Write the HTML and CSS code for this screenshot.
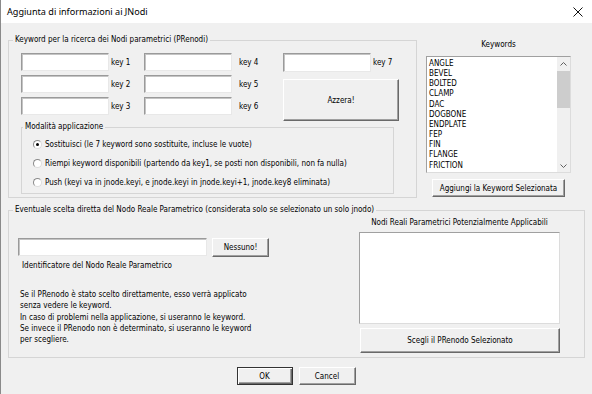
FILE: index.html
```html
<!DOCTYPE html>
<html>
<head>
  <title>Aggiunta di informazioni ai JNodi</title>
  <link rel="stylesheet" href="styles.css">
</head>
<body>
  <div class="window">
    <div class="titlebar">
      <span class="title">Aggiunta di informazioni ai JNodi</span>
      <svg class="close" width="10" height="10" viewBox="0 0 10 10">
        <path d="M0.5 0.5 L9.5 9.5 M9.5 0.5 L0.5 9.5" stroke="#111" stroke-width="1" fill="none"/>
      </svg>
    </div>

    <div class="client">
      <div class="top-row">
        <fieldset class="group group-keys">
          <legend>Keyword per la ricerca dei Nodi parametrici (PRenodi)</legend>
          <div class="keys">
            <div class="key-grid">
              <input type="text" class="field"><span class="key-label">key 1</span>
              <input type="text" class="field"><span class="key-label wide">key 4</span>
              <input type="text" class="field"><span class="key-label">key 2</span>
              <input type="text" class="field"><span class="key-label wide">key 5</span>
              <input type="text" class="field"><span class="key-label">key 3</span>
              <input type="text" class="field"><span class="key-label wide">key 6</span>
            </div>
            <div class="key-side">
              <div class="key7">
                <input type="text" class="field field-7"><span class="key-label">key 7</span>
              </div>
              <button type="button" class="btn btn-reset">Azzera!</button>
            </div>
          </div>

          <fieldset class="group group-mode">
            <legend>Modalità applicazione</legend>
            <div class="radio-row"><span class="radio checked"></span>Sostituisci (le 7 keyword sono sostituite, incluse le vuote)</div>
            <div class="radio-row"><span class="radio"></span>Riempi keyword disponibili (partendo da key1, se posti non disponibili, non fa nulla)</div>
            <div class="radio-row"><span class="radio"></span>Push (keyi va in jnode.keyi, e jnode.keyi in jnode.keyi+1, jnode.key8 eliminata)</div>
          </fieldset>
        </fieldset>

        <div class="kw-panel">
          <div class="kw-title">Keywords</div>
          <div class="listbox kw-list">
            <div class="items">
              <div>ANGLE</div>
              <div>BEVEL</div>
              <div>BOLTED</div>
              <div>CLAMP</div>
              <div>DAC</div>
              <div>DOGBONE</div>
              <div>ENDPLATE</div>
              <div>FEP</div>
              <div>FIN</div>
              <div>FLANGE</div>
              <div>FRICTION</div>
            </div>
            <div class="scrollbar">
              <div class="arrow">
                <svg width="7" height="4" viewBox="0 0 7 4"><path d="M0.5 3.5 L3.5 0.5 L6.5 3.5" stroke="#606060" fill="none"/></svg>
              </div>
              <div class="thumb"></div>
              <div class="track"></div>
              <div class="arrow">
                <svg width="7" height="4" viewBox="0 0 7 4"><path d="M0.5 0.5 L3.5 3.5 L6.5 0.5" stroke="#606060" fill="none"/></svg>
              </div>
            </div>
          </div>
          <button type="button" class="btn btn-add">Aggiungi la Keyword Selezionata</button>
        </div>
      </div>

      <fieldset class="group group-node">
        <legend>Eventuale scelta diretta del Nodo Reale Parametrico (considerata solo se selezionato un solo jnodo)</legend>
        <div class="node-body">
          <div class="node-left">
            <div class="node-input-row">
              <input type="text" class="field field-node">
              <button type="button" class="btn btn-none">Nessuno!</button>
            </div>
            <div class="node-caption">Identificatore del Nodo Reale Parametrico</div>
            <p class="node-note">
              Se il PRenodo è stato scelto direttamente, esso verrà applicato<br>
              senza vedere le keyword.<br>
              In caso di problemi nella applicazione, si useranno le keyword.<br>
              Se invece il PRenodo non è determinato, si useranno le keyword<br>
              per scegliere.
            </p>
          </div>
          <div class="node-right">
            <div class="node-title">Nodi Reali Parametrici Potenzialmente Applicabili</div>
            <div class="listbox node-list"></div>
            <button type="button" class="btn btn-pick">Scegli il PRenodo Selezionato</button>
          </div>
        </div>
      </fieldset>

      <div class="actions">
        <button type="button" class="btn btn-ok">OK</button>
        <button type="button" class="btn btn-cancel">Cancel</button>
      </div>
    </div>
  </div>
</body>
</html>
```
FILE: styles.css
```css
/* dialog in the old windows look */

body {
  margin: 0;
  padding: 0;
  width: 592px;
  height: 394px;
  overflow: hidden;
  font-family: "DejaVu Sans Condensed", "DejaVu Sans", sans-serif;
  font-size: 8px;
  color: #000;
  background-color: #f0f0f0;
}

.window {
  height: 394px;
  box-sizing: border-box;
  border-left: 1px solid #8a8a8a;
  display: flex;
  flex-direction: column;
}

.titlebar {
  height: 23px;
  flex: none;
  background-color: #fff;
  display: flex;
  align-items: center;
  justify-content: space-between;
  padding: 0 9px 0 6px;
}

.title {
  font-family: "Noto Sans", sans-serif;
  font-size: 9.1px;
  color: #000;
}

.client {
  flex: 1;
  padding: 11px 0 0 7px;
}

.top-row {
  display: flex;
  gap: 9px;
}

/* group boxes */

.group {
  margin: 0;
  padding: 0;
  min-width: 0;
  border: 1px solid #d5d5d5;
}

.group legend {
  padding: 0 2px;
  margin-left: 4px;
  line-height: 12px;
}

.group-keys {
  width: 409px;
  box-sizing: border-box;
  padding-bottom: 2px;
}

.keys {
  display: flex;
  margin: 7px 0 0 12px;
}

.key-grid {
  display: grid;
  grid-template-columns: 88px 35px 88px 51px;
  grid-auto-rows: 18px;
  row-gap: 4px;
  align-items: center;
}

.key-label {
  padding-left: 2px;
}

.key-label.wide {
  padding-left: 7px;
}

.key-side {
  width: 115px;
}

.key7 {
  display: flex;
  align-items: center;
}

.field {
  box-sizing: border-box;
  width: 88px;
  height: 18px;
  margin: 0;
  padding: 0 2px;
  font: inherit;
  background-color: #fff;
  border: 1px solid;
  border-color: #9a9a9a #e8e8e8 #e8e8e8 #9a9a9a;
  box-shadow: inset 1px 1px 0 #c4c4c4;
  outline: none;
}

.field-7 {
  height: 19px;
}

.btn {
  box-sizing: border-box;
  margin: 0;
  padding: 0;
  font: inherit;
  color: #000;
  background-color: #f0f0f0;
  border: 1px solid;
  border-color: #fff #696969 #696969 #fff;
  box-shadow: inset -1px -1px 0 #a0a0a0;
  cursor: pointer;
}

.btn-reset {
  display: block;
  width: 116px;
  height: 42px;
  margin-top: 7px;
}

.group-mode {
  width: 373px;
  box-sizing: border-box;
  margin: 0 0 1px 12px;
  padding: 2px 0 1px 0;
}

.group-mode legend {
  margin-left: 1px;
}

.radio-row {
  height: 19px;
  padding-left: 11px;
  display: flex;
  align-items: center;
}

.radio {
  box-sizing: border-box;
  width: 9px;
  height: 9px;
  margin-right: 3px;
  border-radius: 50%;
  border: 1px solid;
  border-color: #8a8a8a #dcdcdc #dcdcdc #8a8a8a;
  background-color: #fff;
  display: flex;
  align-items: center;
  justify-content: center;
}

.radio.checked::after {
  content: "";
  width: 3px;
  height: 3px;
  border-radius: 50%;
  background-color: #000;
}

/* keyword list on the right */

.kw-panel {
  width: 145px;
}

.kw-title {
  margin-top: 5px;
  line-height: 12px;
  text-align: center;
}

.listbox {
  box-sizing: border-box;
  background-color: #fff;
  border: 1px solid;
  border-color: #a0a0a0 #dcdcdc #dcdcdc #a0a0a0;
}

.kw-list {
  margin-top: 5px;
  height: 117px;
  display: flex;
}

.items {
  flex: 1;
  padding: 2px 0 0 2px;
  line-height: 10.15px;
}

.scrollbar {
  width: 13px;
  background-color: #f0f0f0;
  display: flex;
  flex-direction: column;
}

.arrow {
  height: 13px;
  display: flex;
  align-items: center;
  justify-content: center;
}

.thumb {
  height: 37px;
  margin-top: 1px;
  background-color: #cdcdcd;
}

.track {
  flex: 1;
}

.btn-add {
  display: block;
  width: 133px;
  height: 18px;
  margin: 6px 0 0 6px;
}

/* direct choice of the node */

.group-node {
  width: 577px;
  box-sizing: border-box;
  margin-top: 6px;
  padding-bottom: 4px;
}

.node-body {
  display: flex;
}

.node-left {
  width: 350px;
}

.node-input-row {
  display: flex;
  align-items: flex-start;
  gap: 5px;
  margin: 22px 0 0 9px;
}

.field-node {
  width: 189px;
}

.btn-none {
  width: 57px;
  height: 19px;
}

.node-caption {
  margin: 3px 0 0 13px;
  line-height: 12px;
}

.node-note {
  margin: 17px 0 0 11px;
  line-height: 11.3px;
}

.node-right {
  width: 201px;
}

.node-title {
  margin-top: 1px;
  line-height: 12px;
  text-align: center;
}

.node-list {
  height: 92px;
  margin-top: 3px;
}

.btn-pick {
  display: block;
  width: 200px;
  height: 25px;
  margin: 4px 0 0 1px;
}

/* bottom buttons */

.actions {
  display: flex;
  justify-content: center;
  gap: 6px;
  margin-top: 9px;
  padding-right: 8px;
}

.btn-ok {
  width: 56px;
  height: 18px;
  border-color: #333;
  box-shadow: inset 1px 1px 0 #fff, inset -1px -1px 0 #696969, inset -2px -2px 0 #a0a0a0;
}

.btn-cancel {
  width: 57px;
  height: 18px;
}
```
